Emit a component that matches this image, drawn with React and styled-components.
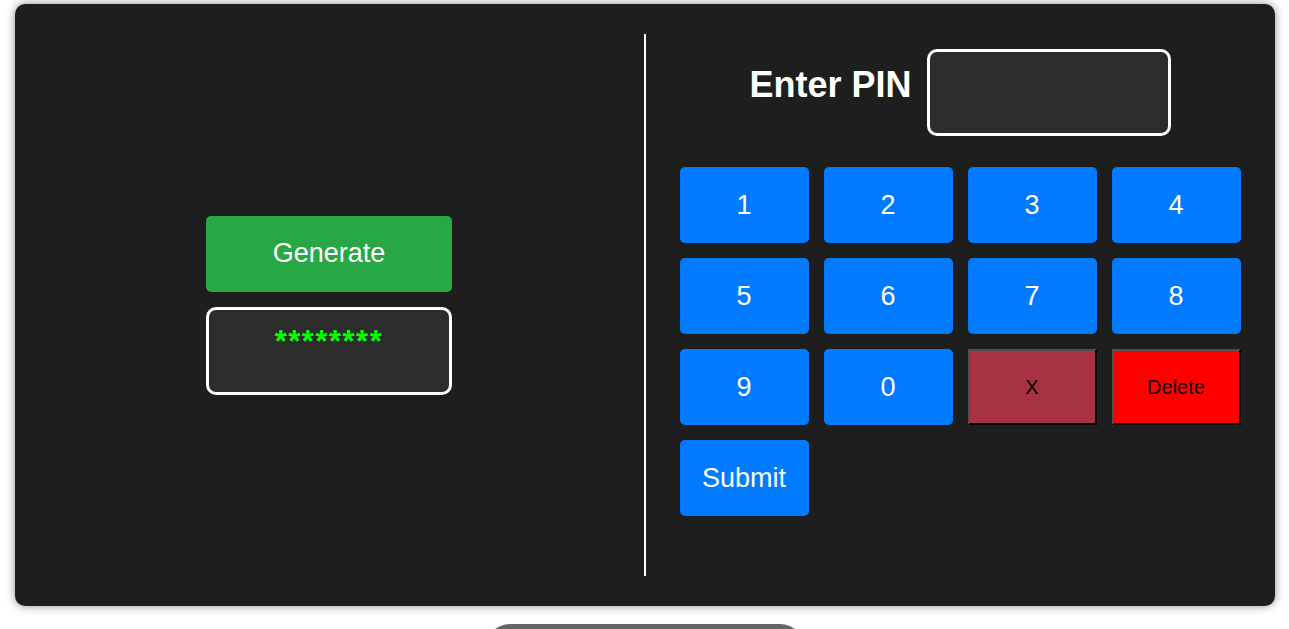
import styled, { createGlobalStyle } from "styled-components"

const GlobalStyle = createGlobalStyle`
    body {
        margin: 0;
        background-color: #ffffff;
        font-family: "Liberation Sans", Arial, sans-serif;
    }
`

const Pagina = styled.div`
    display: flex;
    flex-direction: column;
    align-items: center;
    padding-top: 4px;
    height: 629px;
    overflow: hidden;
    box-sizing: border-box;
`

const Cartao = styled.div`
    width: 1260px;
    height: 602px;
    flex-shrink: 0;
    box-sizing: border-box;
    padding: 30px 0;
    display: flex;
    background-color: #1e1e1e;
    border-radius: 10px;
    box-shadow: 0 0 10px rgba(0, 0, 0, 0.45);
`

const Metade = styled.div`
    flex: 1;
    display: flex;
    flex-direction: column;
    align-items: center;
    justify-content: ${props => (props.$centro ? "center" : "flex-start")};
    padding-top: ${props => (props.$centro ? "0" : "15px")};
`

const Divisor = styled.div`
    width: 2px;
    background-color: #ffffff;
`

const BotaoGerar = styled.button`
    width: 246px;
    height: 76px;
    border: none;
    border-radius: 5px;
    background-color: #28a745;
    color: #ffffff;
    font-family: "Liberation Sans", Arial, sans-serif;
    font-size: 27px;
    cursor: pointer;
`

const CaixaSenha = styled.div`
    width: 246px;
    height: 88px;
    margin-top: 15px;
    box-sizing: border-box;
    padding-top: 14px;
    border: 3px solid #ffffff;
    border-radius: 10px;
    background-color: #2c2c2c;
    color: #00ff00;
    font-size: 31px;
    font-weight: bold;
    letter-spacing: 1.5px;
    text-align: center;
`

const Cabecalho = styled.div`
    display: flex;
    align-items: flex-start;
    gap: 15px;
`

const Rotulo = styled.h2`
    margin: 15px 0 0;
    color: #ffffff;
    font-size: 36px;
    font-weight: bold;
`

const CampoPin = styled.div`
    width: 244px;
    height: 87px;
    box-sizing: border-box;
    border: 3px solid #ffffff;
    border-radius: 10px;
    background-color: #2c2c2c;
`

const Teclado = styled.div`
    margin-top: 31px;
    display: grid;
    grid-template-columns: repeat(4, 129px);
    grid-auto-rows: 76px;
    gap: 15px;
`

const Tecla = styled.button`
    border: none;
    border-radius: 5px;
    background-color: #007bff;
    color: #ffffff;
    font-family: "Liberation Sans", Arial, sans-serif;
    font-size: 27px;
    cursor: pointer;
`

const TeclaAcao = styled.button`
    border: 2px solid;
    border-color: #505050 #000000 #000000 #505050;
    border-radius: 0;
    background-color: ${props => props.$cor};
    color: #000000;
    font-family: "Liberation Sans", Arial, sans-serif;
    font-size: 20px;
    cursor: pointer;
`

const BotaoInferior = styled.div`
    width: 320px;
    height: 50px;
    margin-top: 18px;
    flex-shrink: 0;
    border-radius: 25px;
    background-color: #666666;
`

const numeros = ["1", "2", "3", "4", "5", "6", "7", "8", "9", "0"]

const App = () => {
    return (
        <>
            <GlobalStyle />
            <Pagina>
                <Cartao>
                    <Metade $centro>
                        <BotaoGerar>Generate</BotaoGerar>
                        <CaixaSenha>********</CaixaSenha>
                    </Metade>
                    <Divisor />
                    <Metade>
                        <Cabecalho>
                            <Rotulo>Enter PIN</Rotulo>
                            <CampoPin />
                        </Cabecalho>
                        <Teclado>
                            {numeros.map(n => (
                                <Tecla key={n}>{n}</Tecla>
                            ))}
                            <TeclaAcao $cor="#a83244">X</TeclaAcao>
                            <TeclaAcao $cor="#ff0000">Delete</TeclaAcao>
                            <Tecla>Submit</Tecla>
                        </Teclado>
                    </Metade>
                </Cartao>
                <BotaoInferior />
            </Pagina>
        </>
    )
}

export default App
